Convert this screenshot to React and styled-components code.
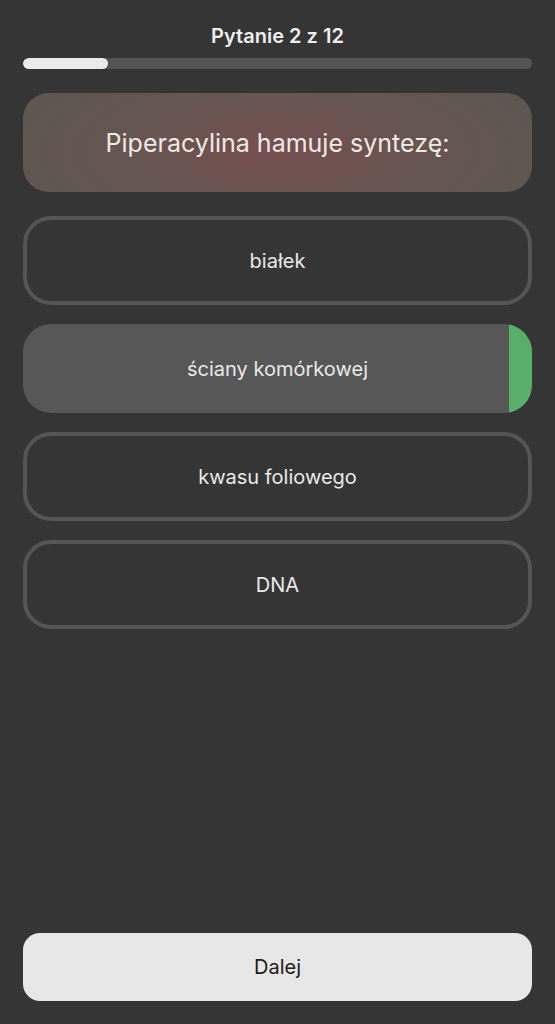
import React, { useState } from 'react'
import styled, { createGlobalStyle } from 'styled-components'

const GlobalStyle = createGlobalStyle`
  html, body {
    margin: 0;
    padding: 0;
    background: #353535;
  }
  body {
    font-family: Inter, "Noto Sans", "Liberation Sans", sans-serif;
    -webkit-font-smoothing: antialiased;
  }
  * { box-sizing: border-box; }
`

const Screen = styled.div`
  min-height: 100vh;
  display: flex;
  flex-direction: column;
  padding: 24px 23px 23px;
`

const Title = styled.div`
  text-align: center;
  font-size: 20px;
  font-weight: 600;
  line-height: 24px;
  color: #efefef;
`

const Track = styled.div`
  margin-top: 10px;
  height: 11px;
  border-radius: 6px;
  background: #545454;
  overflow: hidden;
`

const Fill = styled.div`
  height: 100%;
  border-radius: 6px;
  background: #ebebeb;
`

const QuestionCard = styled.div`
  margin-top: 24px;
  height: 99px;
  border-radius: 26px;
  display: flex;
  align-items: center;
  justify-content: center;
  background: radial-gradient(ellipse 55% 110% at 50% 60%, #754f4f 0%, #665651 55%, #5d5750 100%);
  color: #f1e9e5;
  font-size: 25px;
`

const Options = styled.div`
  margin-top: 24px;
  display: flex;
  flex-direction: column;
  gap: 19px;
`

const Option = styled.div`
  height: 89px;
  border-radius: 28px;
  display: flex;
  overflow: hidden;
  cursor: pointer;
  border: ${p => (p.$selected ? 'none' : '4px solid #555555')};
  background: ${p => (p.$selected ? '#575757' : 'transparent')};
`

const OptionLabel = styled.div`
  flex: 1;
  display: flex;
  align-items: center;
  justify-content: center;
  color: #e9e9e9;
  font-size: 20px;
  padding-left: ${p => (p.$selected ? '23px' : '0')};
`

const Marker = styled.div`
  width: 23px;
  background: #5aae6b;
`

const Spacer = styled.div`
  flex: 1;
`

const NextButton = styled.button`
  height: 68px;
  border: none;
  border-radius: 17px;
  background: #e7e7e7;
  color: #202020;
  font-family: inherit;
  font-size: 20px;
  cursor: pointer;
`

const answers = ['białek', 'ściany komórkowej', 'kwasu foliowego', 'DNA']

const App = () => {
  const [selected, setSelected] = useState(1)
  const current = 2
  const total = 12

  return (
    <>
      <GlobalStyle />
      <Screen>
        <Title>{`Pytanie ${current} z ${total}`}</Title>
        <Track>
          <Fill style={{ width: `${(current - 1) / total * 100 + 8.3}%` }} />
        </Track>
        <QuestionCard>Piperacylina hamuje syntezę:</QuestionCard>
        <Options>
          {answers.map((a, i) => (
            <Option key={a} $selected={i === selected} onClick={() => setSelected(i)}>
              <OptionLabel $selected={i === selected}>{a}</OptionLabel>
              {i === selected && <Marker />}
            </Option>
          ))}
        </Options>
        <Spacer />
        <NextButton>Dalej</NextButton>
      </Screen>
    </>
  )
}

export default App
